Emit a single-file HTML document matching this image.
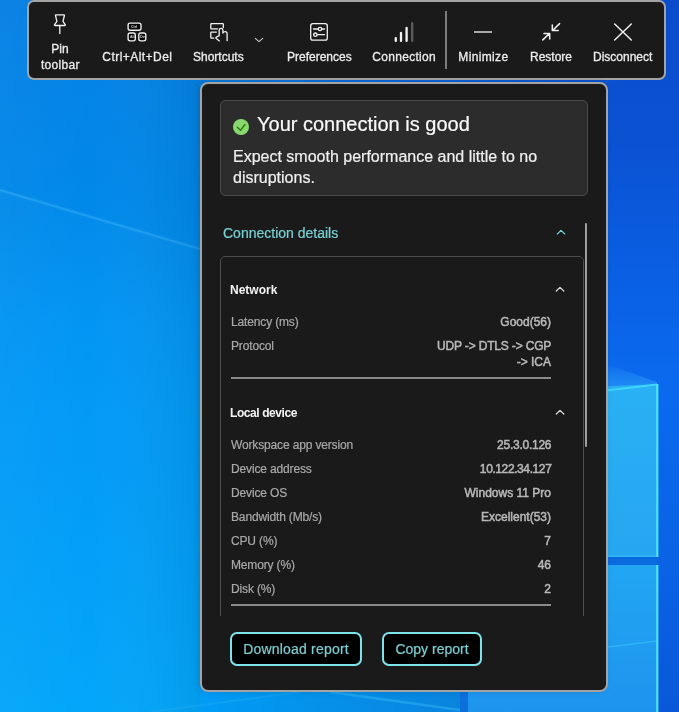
<!DOCTYPE html>
<html><head><meta charset="utf-8">
<style>
html,body{margin:0;padding:0;}
body{width:679px;height:712px;overflow:hidden;position:relative;font-family:"Liberation Sans",sans-serif;background:#0a8ae8;}
.abs{position:absolute;}
#bg{position:absolute;left:0;top:0;}
#tb{position:absolute;left:27px;top:0px;width:635px;height:76px;background:#1a1a1a;border:2px solid #a3a3a3;border-radius:7px;}
.lbl{position:absolute;color:#ececec;font-size:12px;line-height:16px;white-space:nowrap;-webkit-text-stroke:0.3px #ececec;}
.ico{position:absolute;left:0;top:0;}
#panel{position:absolute;left:200px;top:82px;width:404px;height:606px;background:#1a1a1a;border:2px solid #a3a3a3;border-radius:8px;box-shadow:-2px 0 6px rgba(0,0,0,0.12);}
.lab{left:231px;letter-spacing:-0.15px;font-size:12px;line-height:16px;color:#a9a9a9;-webkit-text-stroke:0.2px #a9a9a9;white-space:nowrap;}
.val{right:128px;font-size:12px;line-height:16px;color:#b8b8b8;-webkit-text-stroke:0.5px #b8b8b8;white-space:nowrap;text-align:right;}
.btn{height:34px;box-sizing:border-box;border:2px solid #7fe4ea;border-radius:7px;background:#000;color:#7ad0d3;-webkit-text-stroke:0.2px #7ad0d3;font-size:14px;line-height:30px;text-align:center;white-space:nowrap;}
</style></head>
<body>
<div id="wrap" style="position:absolute;left:0;top:0;width:679px;height:712px;filter:opacity(1)">
<svg id="bg" width="679" height="712" viewBox="0 0 679 712">
  <defs>
    <linearGradient id="gl" x1="0" y1="0" x2="0" y2="712" gradientUnits="userSpaceOnUse">
      <stop offset="0" stop-color="#0680e4"/>
      <stop offset="0.3" stop-color="#0089ea"/>
      <stop offset="0.45" stop-color="#0093f3"/>
      <stop offset="0.58" stop-color="#0098f6"/>
      <stop offset="1" stop-color="#00a5fa"/>
    </linearGradient>
    <linearGradient id="gr" x1="0" y1="0" x2="0" y2="712" gradientUnits="userSpaceOnUse">
      <stop offset="0" stop-color="#0b4ccb"/>
      <stop offset="0.2" stop-color="#0b52d3"/>
      <stop offset="0.42" stop-color="#0a62e6"/>
      <stop offset="0.53" stop-color="#0a6aee"/>
      <stop offset="0.8" stop-color="#0a62e4"/>
      <stop offset="1" stop-color="#0a58d8"/>
    </linearGradient>
    <linearGradient id="pu" x1="0" y1="385" x2="0" y2="557" gradientUnits="userSpaceOnUse">
      <stop offset="0" stop-color="#2ab0f4"/>
      <stop offset="1" stop-color="#26a6f0"/>
    </linearGradient>
    <linearGradient id="pl" x1="0" y1="565" x2="0" y2="712" gradientUnits="userSpaceOnUse">
      <stop offset="0" stop-color="#22a6f2"/>
      <stop offset="1" stop-color="#1e94ee"/>
    </linearGradient>
    <linearGradient id="gb" x1="200" y1="0" x2="460" y2="0" gradientUnits="userSpaceOnUse">
      <stop offset="0" stop-color="#009cf5"/>
      <stop offset="1" stop-color="#0a84de"/>
    </linearGradient>
    <linearGradient id="gt" x1="195" y1="0" x2="625" y2="0" gradientUnits="userSpaceOnUse">
      <stop offset="0" stop-color="#0a7ada"/>
      <stop offset="1" stop-color="#0b50cf"/>
    </linearGradient>
    <linearGradient id="beam" x1="0" y1="360" x2="0" y2="390" gradientUnits="userSpaceOnUse">
      <stop offset="0" stop-color="#2a98f6" stop-opacity="0"/>
      <stop offset="1" stop-color="#2a98f6" stop-opacity="0.8"/>
    </linearGradient>
    <linearGradient id="gh" x1="0" y1="0" x2="200" y2="0" gradientUnits="userSpaceOnUse">
      <stop offset="0" stop-color="#ffffff" stop-opacity="0.025"/>
      <stop offset="0.45" stop-color="#ffffff" stop-opacity="0"/>
      <stop offset="1" stop-color="#000000" stop-opacity="0.065"/>
    </linearGradient>
  </defs>
  <rect x="0" y="0" width="679" height="712" fill="url(#gl)"/>
  <polygon points="0,190 200,249 200,712 0,712" fill="#40c0ff" fill-opacity="0.04"/>
  <path d="M0,190 L200,249" stroke="#36aef4" stroke-opacity="0.3" stroke-width="3.2"/>
  <path d="M0,190 L200,249" stroke="#40b8f8" stroke-opacity="0.35" stroke-width="1.2"/>
  <rect x="0" y="0" width="200" height="712" fill="url(#gh)"/>
  <rect x="560" y="0" width="119" height="712" fill="url(#gr)"/>
  <rect x="200" y="670" width="270" height="42" fill="url(#gb)"/>
  <path d="M150,712 L300,692" stroke="#2eb0f6" stroke-opacity="0.3" stroke-width="2"/>
  <rect x="195" y="76" width="430" height="8" fill="url(#gt)"/>
  <path d="M330,692 L460,710" stroke="#3cc0f8" stroke-opacity="0.4" stroke-width="2.5"/>
  <polygon points="600,362 657,382 657,384 600,393" fill="url(#beam)"/>
  <polygon points="468,393 657,384 657,557 468,557" fill="url(#pu)"/>
  <rect x="468" y="557" width="189" height="8" fill="#0b6ade"/>
  <rect x="460" y="600" width="8" height="112" fill="#0b70da"/>
  <polygon points="468,565 657,565 657,712 468,712" fill="url(#pl)"/>
  <path d="M608,647 L657,641" stroke="#36c4f8" stroke-opacity="0.6" stroke-width="1.5"/>
  <path d="M600,391.2 L657,384.5" stroke="#3ed4fb" stroke-width="2"/>
  <path d="M657.3,384 V557" stroke="#4ce4ff" stroke-width="2.2"/>
  <path d="M600,556 H657" stroke="#34bcf6" stroke-opacity="0.7" stroke-width="1.5"/>
  <path d="M657.3,565 V712" stroke="#4ce4ff" stroke-width="2.2"/>
</svg>

<div id="tb"></div>
<svg class="abs" style="left:0;top:0" width="679" height="80" viewBox="0 0 679 80" fill="none" stroke="#f2f2f2" stroke-linecap="round" stroke-linejoin="round">
  <!-- pin -->
  <path d="M56,14.8 H64 Q64.6,14.8 64.4,15.5 L63,21.3 L65.2,24.6 Q65.6,25.5 64.8,25.5 H55 Q54.2,25.5 54.6,24.6 L56.9,21.3 L55.5,15.5 Q55.3,14.8 56,14.8 Z" stroke-width="1.3"/>
  <path d="M59.8,25.8 V33.6" stroke-width="1.3"/>
  <!-- ctrl alt del -->
  <rect x="128.1" y="23.1" width="12.9" height="7.1" rx="2" fill="#050505" stroke-width="1.35"/>
  <rect x="128.1" y="33" width="7.2" height="7.8" rx="2" fill="#050505" stroke-width="1.35"/>
  <rect x="138.8" y="33" width="7" height="7.8" rx="2" fill="#050505" stroke-width="1.35"/>
  <!-- shortcuts -->
  <path d="M217.6,28.9 H211.4 Q210.8,28.9 210.8,28.3 V24.2 Q210.8,23.6 211.4,23.6 H222.7 Q223.3,23.6 223.3,24.2 V27.6" stroke-width="1.3"/>
  <path d="M216.4,32.1 H211.4 Q210.8,32.1 210.8,32.7 V37.5 Q210.8,38.1 211.4,38.1 H213.8" stroke-width="1.3"/>
  <path d="M219.4,40.9 L216.3,38.5 Q215.5,37.7 216.4,37.1 L219.2,35.7 V30.2 Q219.2,28.4 221.05,28.4 Q222.9,28.4 222.9,30.2 V33 Q223.5,31.6 225.1,31.6 Q227.1,31.6 227.1,33.6 V40.7" stroke-width="1.3"/>
  <path d="M255.3,38.3 L259,41.6 L262.7,38.3" stroke="#c8c8c8" stroke-width="1.1"/>
  <!-- preferences -->
  <rect x="310.7" y="23.7" width="16.6" height="16.5" rx="2.2" stroke-width="1.3"/>
  <path d="M313.5,29 H318.2 M321.8,29 H324.5 M317.2,34.7 H324.5 M313.5,34.7 H313.6" stroke-width="1.3"/>
  <circle cx="320" cy="29" r="1.7" stroke-width="1.3"/>
  <circle cx="315.4" cy="34.7" r="1.7" stroke-width="1.3"/>
  <!-- connection -->
  <path d="M395.8,38.1 V40.9 M401,33 V40.9 M406.6,28 V40.9" stroke-width="2.3"/>
  <path d="M412.2,23.2 V40.9" stroke="#5c5c5c" stroke-width="2.3"/>
  <!-- separator -->
  <rect x="445" y="11" width="2" height="58" fill="#7d7d7d" stroke="none"/>
  <!-- minimize -->
  <path d="M474,32 H492" stroke="#a9a9a9" stroke-width="2" stroke-linecap="butt"/>
  <!-- restore -->
  <path d="M559.6,23.6 L552.8,30.2 M552.3,25 V30.6 H558.3" stroke-width="1.5"/>
  <path d="M542.8,39.9 L549.3,33.6 M544,33.6 H549.7 V39" stroke-width="1.5"/>
  <!-- disconnect -->
  <path d="M614.7,24.1 L631.3,40.1 M631.3,24.1 L614.7,40.1" stroke-width="1.4"/>
</svg>
<div class="abs" style="left:124px;top:19px;width:26px;height:26px;font-size:3.6px;font-weight:bold;color:#d8d8d8;line-height:4px;">
  <span class="abs" style="left:7px;top:5.6px">Ctrl</span>
  <span class="abs" style="left:6px;top:16px">Alt</span>
  <span class="abs" style="left:16.3px;top:16px">Del</span>
</div>
<div class="lbl m" style="left:40px;top:40.7px;width:40px;text-align:center">Pin</div>
<div class="lbl m" style="left:40.3px;top:56.5px;width:40px;text-align:center;letter-spacing:0.3px">toolbar</div>
<div class="lbl m" style="left:102.3px;top:48.7px;letter-spacing:0.45px">Ctrl+Alt+Del</div>
<div class="lbl m" style="left:193px;top:48.7px">Shortcuts</div>
<div class="lbl m" style="left:287px;top:48.7px">Preferences</div>
<div class="lbl m" style="left:372.3px;top:48.7px;letter-spacing:0.3px">Connection</div>
<div class="lbl m" style="left:458.3px;top:48.7px;letter-spacing:0.35px">Minimize</div>
<div class="lbl m" style="left:530px;top:48.7px">Restore</div>
<div class="lbl m" style="left:593px;top:48.7px">Disconnect</div>
<div id="panel"></div>
<div class="abs" style="left:220px;top:100px;width:368px;height:96px;box-sizing:border-box;background:#2c2c2c;border:1px solid #4a4a4a;border-radius:5px;"></div>
<svg class="abs" style="left:0;top:80px" width="679" height="632" viewBox="0 80 679 632" fill="none" stroke-linecap="round" stroke-linejoin="round">
  <circle cx="241" cy="127" r="8" fill="#88d86e"/>
  <path d="M237.3,127.2 L240.5,130.3 L245,124.5" stroke="#2c7412" stroke-width="1.3"/>
  <path d="M557.3,234 L561,230.3 L564.8,234" stroke="#78d2d4" stroke-width="1.15"/>
  <path d="M556.3,291 L560,287.4 L563.8,291" stroke="#dcdcdc" stroke-width="1.3"/>
  <path d="M556.3,414 L560,410.4 L563.8,414" stroke="#dcdcdc" stroke-width="1.3"/>
  <rect x="585" y="223" width="2" height="224" rx="1" fill="#a0a0a0" stroke="none"/>
</svg>
<div class="abs m" style="left:257px;top:112px;font-size:20px;line-height:24px;color:#fafafa;-webkit-text-stroke:0.2px #fafafa;white-space:nowrap">Your connection is good</div>
<div class="abs m" style="left:233px;top:146px;width:345px;font-size:16px;line-height:21px;color:#f0f0f0;-webkit-text-stroke:0.2px #f0f0f0">Expect smooth performance and little to no disruptions.</div>
<div class="abs m" style="left:223px;top:224px;font-size:14px;line-height:18px;color:#78d2d4;-webkit-text-stroke:0.2px #78d2d4;white-space:nowrap">Connection details</div>
<div class="abs m" style="left:230px;top:281.7px;font-size:12px;line-height:16px;font-weight:bold;color:#f4f4f4;white-space:nowrap">Network</div>
<div class="abs m" style="left:230px;top:404.7px;font-size:12px;line-height:16px;font-weight:bold;color:#f4f4f4;white-space:nowrap;letter-spacing:-0.42px" >Local device</div>
<div class="abs m lab" style="top:313.8px">Latency (ms)</div>
<div class="abs m val" style="top:313.8px">Good(56)</div>
<div class="abs m lab" style="top:337.8px">Protocol</div>
<div class="abs m val" style="top:337.8px;letter-spacing:-0.17px;right:127.83px">UDP -&gt; DTLS -&gt; CGP</div>
<div class="abs m val" style="top:353.6px">-&gt; ICA</div>
<div class="abs" style="left:231px;top:377px;width:320px;height:2px;background:#8a8a8a"></div>
<div class="abs m lab" style="top:437.0px">Workspace app version</div>
<div class="abs m val" style="top:437.0px;letter-spacing:-0.25px;right:127.75px">25.3.0.126</div>
<div class="abs m lab" style="top:461.0px">Device address</div>
<div class="abs m val" style="top:461.0px;letter-spacing:-0.4px;right:127.6px">10.122.34.127</div>
<div class="abs m lab" style="top:485.0px">Device OS</div>
<div class="abs m val" style="top:485.0px">Windows 11 Pro</div>
<div class="abs m lab" style="top:509.0px">Bandwidth (Mb/s)</div>
<div class="abs m val" style="top:509.0px">Excellent(53)</div>
<div class="abs m lab" style="top:533.0px">CPU (%)</div>
<div class="abs m val" style="top:533.0px">7</div>
<div class="abs m lab" style="top:557.0px">Memory (%)</div>
<div class="abs m val" style="top:557.0px">46</div>
<div class="abs m lab" style="top:581.0px">Disk (%)</div>
<div class="abs m val" style="top:581.0px">2</div>
<div class="abs" style="left:231px;top:604px;width:320px;height:2px;background:#8a8a8a"></div>
<div class="abs" style="left:220px;top:256px;width:364px;height:360px;overflow:hidden;">
  <div class="abs" style="left:0;top:0;width:364px;height:400px;box-sizing:border-box;border:1px solid #4d4d4d;border-radius:5px;"></div>
</div>

<div class="abs btn" style="left:230px;top:632px;width:132px;"><span class="m" style="letter-spacing:0.2px">Download report</span></div>
<div class="abs btn" style="left:382px;top:632px;width:100px;"><span class="m">Copy report</span></div>
</div>
</body></html>
